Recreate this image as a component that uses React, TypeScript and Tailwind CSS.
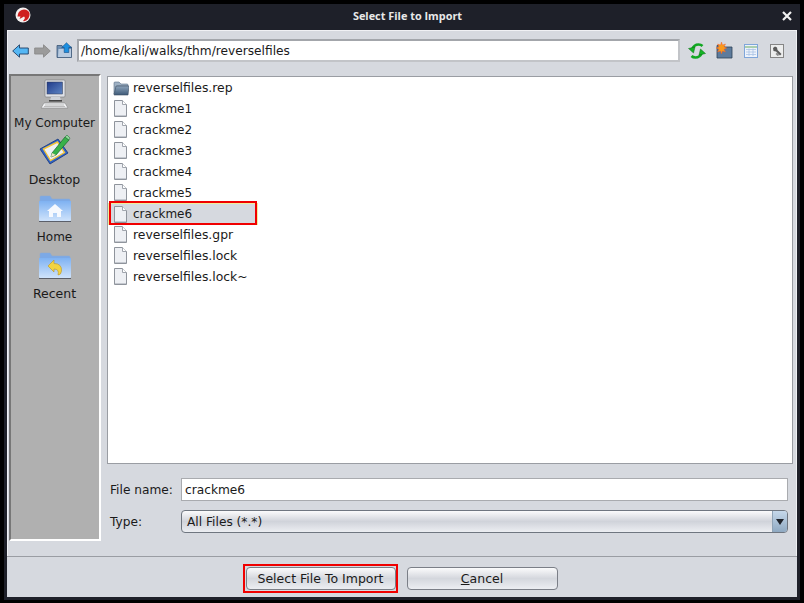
const FileIcon = () => (
  <svg width="15" height="17" viewBox="0 0 15 17" className="shrink-0">
    <path d="M1.5 .5H9.5L13.5 4.5V16.5H1.5Z" fill="#eef0f4" stroke="#8f949c" />
    <path d="M9.5 .5V4.5H13.5" fill="#fff" stroke="#a0a5ad" />
    <path d="M2 16H13V15H2Z" fill="#c5c9d0" />
  </svg>
);

const FolderIcon = () => (
  <svg width="16" height="16" viewBox="0 0 16 16" className="shrink-0">
    <defs>
      <linearGradient id="rf" x1="0" y1="0" x2="0" y2="1">
        <stop offset="0" stopColor="#8ea4bb" />
        <stop offset="1" stopColor="#3e5a78" />
      </linearGradient>
    </defs>
    <path d="M1 14V3Q1 2 2 2H6L8 4H14Q15 4 15 5V6H4L1 14Z" fill="#9fb1c4" stroke="#5a6f86" strokeWidth=".6" />
    <path d="M1 15L3 6H16L15 15Z" fill="url(#rf)" stroke="#3d4f63" strokeWidth=".6" />
  </svg>
);

const rows = ["crackme1", "crackme2", "crackme3", "crackme4", "crackme5"];
const rowsAfter = ["reverselfiles.gpr", "reverselfiles.lock", "reverselfiles.lock~"];

const Row = ({ label }: { label: string }) => (
  <div className="h-[21px] flex items-center gap-[5px] pl-[5px]">
    <FileIcon />
    <span className={label.startsWith("crack") ? "text-[12px]" : "text-[12.4px] pt-[2px]"}>{label}</span>
  </div>
);

const ComputerIcon = () => (
  <svg width="30" height="30" viewBox="0 0 30 30">
    <defs>
      <linearGradient id="scr" x1="0" y1="0" x2="1" y2="1">
        <stop offset="0" stopColor="#1f3a8a" />
        <stop offset="1" stopColor="#5f86c4" />
      </linearGradient>
    </defs>
    <rect x="5" y="1" width="20" height="17" rx="1" fill="#dfe2e8" stroke="#777" strokeWidth=".6" />
    <rect x="7" y="3" width="15.5" height="12" fill="url(#scr)" stroke="#333a50" strokeWidth=".5" />
    <path d="M11 18H20L21 22H10Z" fill="#cfd2d8" />
    <rect x="9" y="21" width="13" height="1.6" fill="#444" />
    <path d="M4 24H25L28 29H1Z" fill="#f0f1f3" stroke="#7a7a7a" strokeWidth=".5" />
    <path d="M5 26H24M4 27.5H25" stroke="#a5a5a5" strokeWidth=".7" />
  </svg>
);

const DesktopIcon = () => (
  <svg width="32" height="32" viewBox="0 0 32 32">
    <path d="M1 15L19 5L29 19L11 30Z" fill="#2f62c9" stroke="#173779" strokeWidth=".8" />
    <path d="M4.5 15L18.5 8L25.5 18.5L11.5 26.5Z" fill="#eef0f4" stroke="#f3c53a" strokeWidth="1.4" />
    <path d="M13 19L26 3L30 6L17 21L12 23Z" fill="#38b24a" stroke="#17652a" strokeWidth=".7" />
    <path d="M12 23L13 19L17 21Z" fill="#f0e2c0" />
    <path d="M26 3L28 1L31 4L30 6Z" fill="#8fd79a" stroke="#17652a" strokeWidth=".5" />
  </svg>
);

const BlueFolder = ({ children }: { children: React.ReactNode }) => (
  <svg width="32" height="28" viewBox="0 0 32 28">
    <defs>
      <linearGradient id="bf" x1="0" y1="0" x2="0" y2="1">
        <stop offset="0" stopColor="#7fb2f2" />
        <stop offset="1" stopColor="#cfe3fb" />
      </linearGradient>
    </defs>
    <path d="M1 5V2Q1 1 2 1H11L13 4H30Q31 4 31 5V8H1Z" fill="#7ca9e6" stroke="#88a8d4" strokeWidth=".5" />
    <path d="M0 6H32V25Q32 26 31 26H1Q0 26 0 25Z" fill="url(#bf)" />
    <path d="M0 26.5H32" stroke="#5b5f69" strokeWidth="1" />
    {children}
  </svg>
);

const Place = ({ label, icon, wide }: { label: string; icon: React.ReactNode; wide?: boolean }) => (
  <div className="h-[57px] flex flex-col items-center justify-end pr-[1px]">
    <div className="flex-1 flex items-end justify-center pb-[3px]">{icon}</div>
    <div className={wide ? "h-[22px] leading-[22px] mb-[3px] text-[12.5px]" : "h-[22px] leading-[22px] mb-[3px] text-[12px]"}>{label}</div>
  </div>
);

export default function App() {
  return (
    <div
      className="w-[804px] h-[603px] bg-black pt-[4px] pl-[4px] pr-[4px] pb-[3px] text-[12.2px] text-[#1a1a1a] overflow-hidden"
      style={{ fontFamily: '"DejaVu Sans", sans-serif' }}
    >
      <div className="w-full h-full bg-[#1e2029] flex flex-col px-[3px] pb-[3px]">
        {/* Title bar */}
        <div className="h-[26px] shrink-0 relative flex items-center justify-center text-[#e8e8e8] font-bold text-[10.9px] pl-[11px]" style={{ fontFamily: '"Open Sans", sans-serif' }}>
          <span className="relative top-[-1px]">Select File to Import</span>
          <svg width="16" height="16" viewBox="0 0 16 16" className="absolute left-[8px] top-[3px]">
            <circle cx="8" cy="8" r="7.5" fill="#f4f1f0" />
            <path d="M3 7Q4 3 9 2.5Q13 2.5 14.5 6Q15 10 12 13Q10 14.5 8 14Q11 11 9 9.5Q6 11 4.5 12L5.5 9.5L2.5 9.5Z" fill="#cf1f1f" />
          </svg>
          <svg width="12" height="12" viewBox="0 0 12 12" className="absolute right-[4px] top-[6px]">
            <path d="M2 2L10 10M10 2L2 10" stroke="#f2f2f2" strokeWidth="2.2" />
          </svg>
        </div>

        {/* Body */}
        <div className="flex-1 flex flex-col bg-[#d6d9df] min-h-0">
          <div className="flex-1 flex flex-col border-t border-l border-r border-t-[#f0f1f4] border-l-[#f0f1f4] border-r-[#eef0f3] min-h-0">
            {/* Toolbar */}
            <div className="h-[39px] shrink-0 flex items-center relative">
              <div className="w-[69px] shrink-0 flex items-center pl-[4px]">
                <svg width="17" height="14" viewBox="0 0 17 14">
                  <path d="M.7 7L7.5 .8V4H16.3V10H7.5V13.2Z" fill="#55b7f4" stroke="#1f3f66" strokeWidth=".9" />
                </svg>
                <svg width="17" height="14" viewBox="0 0 17 14" className="ml-[5px]">
                  <path d="M16.3 7L9.5 .8V4H.7V10H9.5V13.2Z" fill="#9b9b9b" stroke="#8a8a8a" strokeWidth=".9" />
                </svg>
                <svg width="17" height="17" viewBox="0 0 17 17" className="ml-[5px]">
                  <path d="M1 15.5V3.5H6L7.5 5H15.5V15.5Z" fill="#6f8fb3" stroke="#3c5776" strokeWidth=".8" />
                  <path d="M2 15L2.5 7H15V15Z" fill="#b9cbe0" />
                  <path d="M10.5 .8L15.3 5.5H12.8V10.5H8.2V5.5H5.7Z" fill="#1d8fe0" stroke="#134d86" strokeWidth=".6" />
                </svg>
              </div>
              <div className="w-[603px] h-[23px] shrink-0 bg-white border-2 border-t-[#a3a6ab] border-l-[#a3a6ab] border-r-[#c2c4c8] border-b-[#c2c4c8] flex items-center pl-[2px] pt-[2px]">
                /home/kali/walks/thm/reverselfiles
              </div>
              <div className="flex-1 flex items-center pl-[8px]">
                <svg width="18" height="18" viewBox="0 0 18 18">
                  <path d="M4 7.5Q6 2.5 10.5 2.5Q13 2.5 14.5 4" fill="none" stroke="#12a822" strokeWidth="2.6" />
                  <path d="M.5 6.5L7 5L5.5 11Z" fill="#16b526" stroke="#0a6b14" strokeWidth=".5" />
                  <path d="M14 10.5Q12 15.5 7.5 15.5Q5 15.5 3.5 14" fill="none" stroke="#12a822" strokeWidth="2.6" />
                  <path d="M17.5 11.5L11 13L12.5 7Z" fill="#16b526" stroke="#0a6b14" strokeWidth=".5" />
                </svg>
                <svg width="17" height="17" viewBox="0 0 17 17" className="ml-[10px]">
                  <path d="M1 16V3.5H7L8.5 5H16V16Z" fill="#5d7b9c" stroke="#2f4257" strokeWidth=".8" />
                  <path d="M5.5 0L6.5 3L9.5 2L8 4.8L10.8 6L8 7.2L9.5 10L6.5 9L5.5 12L4.5 9L1.5 10L3 7.2L.2 6L3 4.8L1.5 2L4.5 3Z" fill="#f99a1c" stroke="#f2542a" strokeWidth=".4" />
                </svg>
                <svg width="14" height="14" viewBox="0 0 14 14" className="ml-[11px]">
                  <rect x=".5" y=".5" width="13" height="13" fill="#eef3fb" stroke="#7fa6da" />
                  <path d="M1 3H13" stroke="#8fbf8f" strokeWidth="1.4" />
                  <path d="M2 5.5H12M2 8H12M2 10.5H12M5 4.5V12M9 4.5V12" stroke="#a9c3e6" strokeWidth=".8" />
                </svg>
                <svg width="14" height="14" viewBox="0 0 14 14" className="ml-[12px]">
                  <rect x=".5" y=".5" width="13" height="13" fill="#eceded" stroke="#858585" />
                  <path d="M3 4L5 2.5L7 3.5L7.5 6L11.5 10L10 11.5L6 7.5L3.5 7Z" fill="#5b5b5b" />
                  <path d="M7 8.5L9.5 11L7.5 12L5.5 10Z" fill="#8b8b8b" />
                </svg>
              </div>
            </div>

            {/* Middle */}
            <div className="flex-1 flex min-h-0 pl-[1px] pr-[3px]">
              <div className="w-[92px] shrink-0 mt-[4px] mb-[15px] pt-[4px] bg-[#b0b0b0] border-2 border-t-[#777] border-l-[#777] border-r-white border-b-white">
                <Place label="My Computer" icon={<ComputerIcon />} />
                <Place label="Desktop" wide icon={<DesktopIcon />} />
                <Place label="Home" icon={
                  <BlueFolder>
                    <path d="M16 9L24 16H22V22H18V18H14V22H10V16H8Z" fill="#f6f9fe" />
                  </BlueFolder>
                } />
                <Place label="Recent" wide icon={
                  <BlueFolder>
                    <path d="M9 14L15 8V11.5Q23 11.5 22.5 19Q22 23 19 23Q20.5 17 15 17V20Z" fill="#f2d341" stroke="#b8932a" strokeWidth=".6" />
                  </BlueFolder>
                } />
              </div>
              <div className="flex-1 min-w-0 flex flex-col ml-[6px]">
                <div className="h-[388px] shrink-0 mt-[6px] bg-white border border-[#9a9da3]">
                  <div className="h-[21px] flex items-center gap-[4px] pl-[5px]">
                    <FolderIcon />
                    <span className="text-[12.4px] pt-[2px]">reverselfiles.rep</span>
                  </div>
                  {rows.map((r) => <Row key={r} label={r} />)}
                  <div className="relative w-[150px] h-[22px] flex items-center gap-[5px] pl-[4px] bg-[#d6d9df] border border-[#f2ee9a] mb-[-1px]">
                    <FileIcon />
                    <span className="text-[12px]">crackme6</span>
                    <div className="absolute left-[0px] top-[-3px] w-[148px] h-[24px] border-2 border-[#f00000]" />
                  </div>
                  {rowsAfter.map((r) => <Row key={r} label={r} />)}
                </div>
                <div className="flex items-center h-[23px] mt-[14px] pl-[3px]">
                  <span className="w-[71px] shrink-0 pt-[2px]">File name:</span>
                  <div className="w-[607px] h-[23px] bg-white border border-[#a9abaf] flex items-center pl-[3px] pt-[2px]">crackme6</div>
                </div>
                <div className="flex items-center h-[23px] mt-[9px] pl-[3px]">
                  <span className="w-[71px] shrink-0 pt-[2px]">Type:</span>
                  <div className="w-[607px] h-[23px] rounded-[4px] border border-[#6f7680] flex items-center pl-[5px] bg-gradient-to-b from-[#fbfbfc] via-[#d0d3da] to-[#eceef2] overflow-hidden">
                    <span className="flex-1 pt-[2px]">All Files (*.*)</span>
                    <div className="w-[15px] h-full flex items-center justify-center bg-gradient-to-b from-[#c6d8ea] to-[#8fa9c2] border-l border-[#8fa3b6]">
                      <svg width="8" height="6" viewBox="0 0 8 6"><path d="M0 0H8L4 6Z" fill="#20242c" /></svg>
                    </div>
                  </div>
                </div>
              </div>
            </div>
          </div>

          {/* Footer */}
          <div className="h-[41px] shrink-0 border-t border-[#9a9da3] flex items-start justify-center gap-[11px] pt-[10px] relative">
            <div className="relative w-[150px] h-[23px] ml-[-1px] rounded-[4px] border border-[#7b7f87] bg-gradient-to-b from-[#fbfbfc] via-[#d4d7dd] to-[#eceef2] flex items-center justify-center text-[12.5px] pt-[2px]">
              Select File To Import
              <div className="absolute left-[-4px] top-[-4px] w-[155px] h-[29px] border-2 border-[#f00000]" />
            </div>
            <div className="w-[151px] h-[23px] rounded-[4px] border border-[#7b7f87] bg-gradient-to-b from-[#fbfbfc] via-[#d4d7dd] to-[#eceef2] flex items-center justify-center text-[12.5px] pt-[2px]">
              <span><span className="underline">C</span>ancel</span>
            </div>
          </div>
        </div>
      </div>
    </div>
  );
}
